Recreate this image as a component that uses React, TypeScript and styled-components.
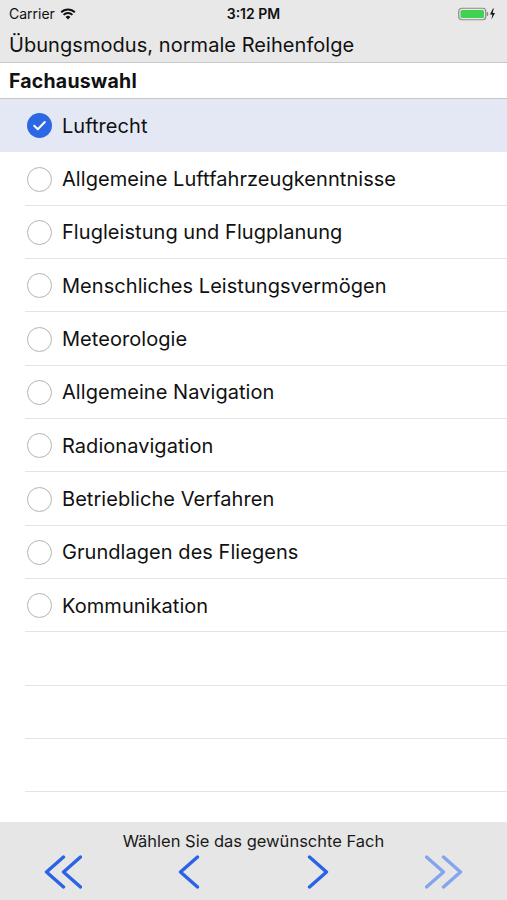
import React, { useState } from "react";
import styled, { createGlobalStyle } from "styled-components";

const subjects = [
  "Luftrecht",
  "Allgemeine Luftfahrzeugkenntnisse",
  "Flugleistung und Flugplanung",
  "Menschliches Leistungsvermögen",
  "Meteorologie",
  "Allgemeine Navigation",
  "Radionavigation",
  "Betriebliche Verfahren",
  "Grundlagen des Fliegens",
  "Kommunikation",
];

const EMPTY_ROWS = 3;

const GlobalStyle = createGlobalStyle`
  html, body {
    margin: 0;
    padding: 0;
    background: #ffffff;
  }
  body {
    font-family: Inter, "Liberation Sans", Arial, sans-serif;
    color: #111;
  }
`;

const Screen = styled.div`
  width: 507px;
  height: 900px;
  display: flex;
  flex-direction: column;
  background: #fff;
  overflow: hidden;
`;

const TopArea = styled.header`
  background: #e8e8e8;
  border-bottom: 1px solid #c6c6c6;
`;

const StatusBar = styled.div`
  height: 27px;
  display: grid;
  grid-template-columns: 1fr auto 1fr;
  align-items: center;
  padding: 0 9px;
  font-size: 14px;
`;

const StatusLeft = styled.div`
  display: flex;
  align-items: center;
  gap: 5px;
`;

const StatusTime = styled.div`
  font-weight: 600;
  font-size: 14px;
`;

const StatusRight = styled.div`
  display: flex;
  justify-content: flex-end;
  align-items: center;
  gap: 3px;
  padding-right: 2px;
`;

const NavTitle = styled.div`
  height: 35px;
  display: flex;
  align-items: center;
  padding: 0 9px;
  font-size: 20px;
  letter-spacing: 0.05px;
`;

const SectionHeader = styled.div`
  height: 36px;
  display: flex;
  align-items: center;
  padding: 0 9px;
  font-size: 19.5px;
  font-weight: 700;
  letter-spacing: 0.2px;
  border-bottom: 1px solid #c6c6c6;
  box-sizing: border-box;
`;

const List = styled.div`
  flex: 1;
  display: flex;
  flex-direction: column;
`;

const Row = styled.div<{ $selected?: boolean }>`
  height: 53.35px;
  flex: 0 0 53.35px;
  display: flex;
  align-items: center;
  position: relative;
  background: ${({ $selected }) => ($selected ? "#e3e8f4" : "#fff")};
  cursor: pointer;

  &::after {
    content: "";
    position: absolute;
    left: 25px;
    right: 0;
    bottom: 0;
    height: 1px;
    background: ${({ $selected }) => ($selected ? "transparent" : "#e4e4e4")};
  }
`;

const Radio = styled.div<{ $checked?: boolean }>`
  width: 25px;
  height: 25px;
  margin-left: 27px;
  margin-right: 10px;
  box-sizing: border-box;
  border-radius: 50%;
  border: ${({ $checked }) => ($checked ? "none" : "1.5px solid #b4b4b4")};
  background: ${({ $checked }) => ($checked ? "#2d68e4" : "#fff")};
  display: flex;
  align-items: center;
  justify-content: center;
`;

const Label = styled.span`
  font-size: 20px;
  letter-spacing: 0.05px;
`;

const Toolbar = styled.footer`
  height: 78px;
  background: #e6e6e6;
  display: flex;
  flex-direction: column;
  align-items: center;
`;

const Hint = styled.div`
  margin-top: 9px;
  font-size: 16.5px;
  color: #1a1a1a;
`;

const Buttons = styled.div`
  width: 100%;
  margin-top: 4px;
  display: grid;
  grid-template-columns: repeat(4, 1fr);
  align-items: center;
`;

const NavButton = styled.button<{ $dim?: boolean }>`
  border: none;
  background: none;
  padding: 0;
  height: 34px;
  display: flex;
  align-items: center;
  justify-content: center;
  color: ${({ $dim }) => ($dim ? "#85a4ee" : "#2b62e6")};
  cursor: pointer;
`;

const Wifi = () => (
  <svg width="16" height="12" viewBox="0 0 16 12">
    <path d="M8 11.5 L5.6 8.9 A3.4 3.4 0 0 1 10.4 8.9 Z" fill="#111" />
    <path d="M3.6 6.9 A6.2 6.2 0 0 1 12.4 6.9" stroke="#111" strokeWidth="2" fill="none" />
    <path d="M1.2 4.3 A9.6 9.6 0 0 1 14.8 4.3" stroke="#111" strokeWidth="2" fill="none" />
  </svg>
);

const Battery = () => (
  <svg width="38" height="14" viewBox="0 0 38 14">
    <rect x="0.75" y="1.25" width="27" height="11.5" rx="3" fill="none" stroke="#8a8a8a" strokeWidth="1.2" />
    <rect x="2.5" y="3" width="23.5" height="8" rx="1.5" fill="#3fd34f" />
    <rect x="28.6" y="5" width="1.6" height="4" rx="0.8" fill="#8a8a8a" />
    <path d="M35 1.5 L32 7.6 H34.4 L33.4 12.5 L37 6 H34.6 L35.8 1.5 Z" fill="#111" />
  </svg>
);

const Check = () => (
  <svg width="25" height="25" viewBox="0 0 25 25">
    <path d="M7.2 12.8 L10.8 16.3 L17.8 9" stroke="#fff" strokeWidth="2" fill="none" strokeLinecap="round" strokeLinejoin="round" />
  </svg>
);

const Chevron = ({ dir, double }: { dir: "left" | "right"; double?: boolean }) => {
  const w = double ? 38 : 24;
  const pts = double ? [2.5, 19.5] : [2.5];
  return (
    <svg width={w} height="34" viewBox={`0 0 ${w} 34`} style={{ transform: dir === "right" ? "scaleX(-1)" : undefined }}>
      {pts.map((x) => (
        <path
          key={x}
          d={`M${x + 17} 2 L${x} 17 L${x + 17} 32`}
          stroke="currentColor"
          strokeWidth="3.4"
          fill="none"
          strokeLinecap="round"
          strokeLinejoin="round"
        />
      ))}
    </svg>
  );
};

export default function App() {
  const [selected, setSelected] = useState(0);

  return (
    <>
      <GlobalStyle />
      <Screen>
        <TopArea>
          <StatusBar>
            <StatusLeft>
              Carrier <Wifi />
            </StatusLeft>
            <StatusTime>3:12 PM</StatusTime>
            <StatusRight>
              <Battery />
            </StatusRight>
          </StatusBar>
          <NavTitle>Übungsmodus, normale Reihenfolge</NavTitle>
        </TopArea>
        <SectionHeader>Fachauswahl</SectionHeader>
        <List>
          {subjects.map((s, i) => (
            <Row key={s} $selected={i === selected} onClick={() => setSelected(i)}>
              <Radio $checked={i === selected}>{i === selected && <Check />}</Radio>
              <Label>{s}</Label>
            </Row>
          ))}
          {Array.from({ length: EMPTY_ROWS }).map((_, i) => (
            <Row key={`empty-${i}`} />
          ))}
        </List>
        <Toolbar>
          <Hint>Wählen Sie das gewünschte Fach</Hint>
          <Buttons>
            <NavButton>
              <Chevron dir="left" double />
            </NavButton>
            <NavButton>
              <Chevron dir="left" />
            </NavButton>
            <NavButton>
              <Chevron dir="right" />
            </NavButton>
            <NavButton $dim>
              <Chevron dir="right" double />
            </NavButton>
          </Buttons>
        </Toolbar>
      </Screen>
    </>
  );
}
